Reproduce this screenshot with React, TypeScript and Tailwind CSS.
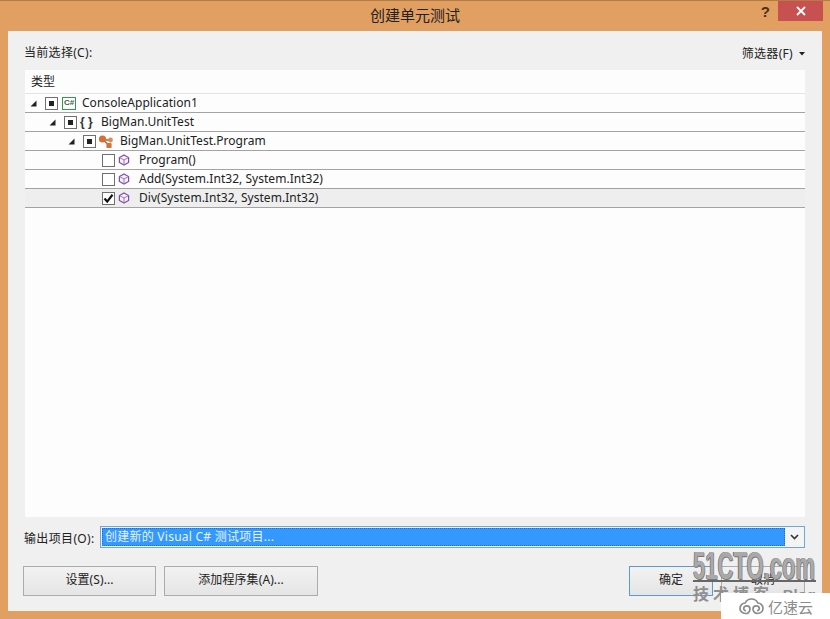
import React from 'react';

const UI_FONT = 'font-["Noto_Sans","Noto_Sans_CJK_SC",sans-serif]';

type Row = {
  level: number;
  label: string;
  kind: 'project' | 'namespace' | 'class' | 'method';
  check: 'mixed' | 'on' | 'off';
  selected?: boolean;
};

const rows: Row[] = [
  { level: 0, label: 'ConsoleApplication1', kind: 'project', check: 'mixed' },
  { level: 1, label: 'BigMan.UnitTest', kind: 'namespace', check: 'mixed' },
  { level: 2, label: 'BigMan.UnitTest.Program', kind: 'class', check: 'mixed' },
  { level: 3, label: 'Program()', kind: 'method', check: 'off' },
  { level: 3, label: 'Add(System.Int32, System.Int32)', kind: 'method', check: 'off' },
  { level: 3, label: 'Div(System.Int32, System.Int32)', kind: 'method', check: 'on', selected: true },
];

function Expander() {
  return (
    <svg width="7" height="7" viewBox="0 0 7 7" className="block">
      <path d="M6.5 0.5V6.5H0.5Z" fill="#222" />
    </svg>
  );
}

function CheckBox({ state }: { state: Row['check'] }) {
  return (
    <div className="w-[13px] h-[13px] shrink-0 border border-[#6f6f6f] bg-white flex items-center justify-center">
      {state === 'mixed' && <div className="w-[5px] h-[5px] bg-[#222]" />}
      {state === 'on' && (
        <svg width="11" height="11" viewBox="0 0 11 11">
          <path d="M1.5 5.6 L4.2 8.6 L9.5 1.8" fill="none" stroke="#111" strokeWidth="2.2" />
        </svg>
      )}
    </div>
  );
}

function MethodIcon() {
  return (
    <svg width="12" height="12" viewBox="0 0 12 12" className="block">
      <path d="M6 1 L10.6 3.5 V8.5 L6 11 L1.4 8.5 V3.5 Z" fill="#f4effa" stroke="#7d4fa8" strokeWidth="1.2" />
      <path d="M1.6 3.6 L6 6 L10.4 3.6 M6 6 V10.8" fill="none" stroke="#9b78c0" strokeWidth="1" />
    </svg>
  );
}

function ClassIcon() {
  return (
    <svg width="16" height="15" viewBox="0 0 16 15" className="block">
      <path d="M5 6 L12 6 M5 6 L11 11" stroke="#a9612f" strokeWidth="1.4" fill="none" />
      <circle cx="4.5" cy="5" r="3.6" fill="#d2723a" />
      <circle cx="12.5" cy="6" r="2.4" fill="#dd8a55" />
      <rect x="8.4" y="9" width="5.2" height="5" rx="1" fill="#d2723a" />
    </svg>
  );
}

function RowIcon({ kind }: { kind: Row['kind'] }) {
  if (kind === 'project') {
    return (
      <div className="ml-[2px] w-[14px] h-[13px] border border-[#2f9e4a] bg-white flex items-center justify-center text-[8px] leading-none font-bold text-[#3f5a48] font-['Liberation_Sans',sans-serif]">
        C#
      </div>
    );
  }
  if (kind === 'namespace') {
    return <div className="ml-[1px] text-[12px] leading-none whitespace-nowrap font-bold text-[#333] font-['Liberation_Sans',sans-serif]">{'{ }'}</div>;
  }
  if (kind === 'class') return <ClassIcon />;
  return <div className="ml-[1px]"><MethodIcon /></div>;
}

function TreeRow({ row }: { row: Row }) {
  const isLeaf = row.kind === 'method';
  return (
    <div
      className={`h-[19px] flex items-center border-b border-[#a3a3a3] ${row.selected ? 'bg-[#eeeeee]' : 'bg-[#fdfdfd]'}`}
      style={{ paddingLeft: 5 + row.level * 19 }}
    >
      <div className="w-[15px] shrink-0">{!isLeaf && <Expander />}</div>
      <CheckBox state={row.check} />
      <div className="w-[24px] shrink-0 pl-[2px] flex items-center">
        <RowIcon kind={row.kind} />
      </div>
      <span className="text-[12px] leading-none tracking-[0.03px] text-[#222] whitespace-nowrap">{row.label}</span>
    </div>
  );
}

function DialogButton({ label, className }: { label: string; className: string }) {
  return (
    <button className={`h-[30px] pb-[2px] border bg-gradient-to-b from-[#f2f2f2] to-[#e5e5e5] text-[12px] tracking-[0.1px] text-[#222] ${className}`}>
      {label}
    </button>
  );
}

function Watermark() {
  return (
    <div className="absolute right-0 bottom-0 w-[137px] h-[67px] font-['Liberation_Sans','Noto_Sans_CJK_SC',sans-serif]">
      <div className="absolute left-0 top-0 w-[123px] h-[30px] border-b-2 border-[#666] overflow-visible">
        <span className="block origin-top-left scale-x-[0.58] text-[38px] leading-[28px] font-bold text-[#a9a9a9] whitespace-nowrap [text-shadow:-1px_0_0_#666,1px_1px_0_#777]">51CTO.com</span>
      </div>
      <div className="absolute left-0 top-[33px] w-[123px] flex justify-between text-[16px] leading-[20px] font-bold text-[#8f8f8f]">
        <span className="tracking-[4px]">技术博客</span>
        <span className="text-[15px]">Blog</span>
      </div>
      <div className="absolute left-[28px] right-0 top-[41px] bottom-0 bg-white flex items-center pl-[18px] gap-[4px]">
        <svg width="25" height="17" viewBox="0 0 25 17" fill="none" stroke="#8b8b8b" strokeWidth="1.7" className="block">
          <path d="M9 15.5 H6.5 C3.3 15.5 1 13.2 1 10.3 C1 7.3 3.4 5 6.2 5 C7.3 2.5 9.7 1 12.5 1 C15.3 1 17.7 2.5 18.8 5 C21.6 5 24 7.3 24 10.3 C24 13.2 21.7 15.5 18.5 15.5 C15.8 15.5 14 13.4 14 11 C14 9 15.4 7.8 17.3 7.8 C19 7.8 20.3 9 20.3 10.6 C20.3 12 19.2 12.8 18 12.6" />
          <path d="M7 12.6 C5.8 12.8 4.7 12 4.7 10.6 C4.7 9 6 7.8 7.7 7.8 C9.6 7.8 11 9 11 11 C11 13 10 14.5 8.5 15.5" />
        </svg>
        <span className="text-[15px] leading-none text-[#8b8b8b] font-['Noto_Sans_CJK_SC',sans-serif]">亿速云</span>
      </div>
    </div>
  );
}

export default function App() {
  return (
    <div className={`relative w-[830px] h-[619px] overflow-hidden bg-[#e29f62] border-t border-[#b27c48] flex flex-col ${UI_FONT}`}>
      {/* title bar */}
      <div className="relative h-[30px] shrink-0 pb-[2px] flex items-center justify-center text-[15px] text-[#222]">
        创建单元测试
        <span className="absolute right-[60px] top-[1px] text-[15px] leading-[20px] font-bold text-[#4a3218] font-['Liberation_Sans',sans-serif]">?</span>
        <div className="absolute right-[7px] top-0 w-[45px] h-[20px] bg-[#c75050] flex items-center justify-center">
          <svg width="10" height="10" viewBox="0 0 10 10">
            <path d="M1 1 L9 9 M9 1 L1 9" stroke="#fff" strokeWidth="1.8" />
          </svg>
        </div>
      </div>

      {/* client area */}
      <div className="mx-2 h-[580px] shrink-0 bg-[#f0f0f0] flex flex-col text-[#222]">
        <div className="h-[39px] shrink-0 pl-[16px] pr-[17px] flex justify-between items-start pt-[14px] text-[12px] tracking-[0.3px] leading-4">
          <span>当前选择(C):</span>
          <span className="flex items-center gap-[6px] pt-[1px]">
            筛选器(F)
            <svg width="6" height="4" viewBox="0 0 6 4" className="block">
              <path d="M0 0H6L3 3.5Z" fill="#222" />
            </svg>
          </span>
        </div>

        <div className="mx-[17px] h-[447px] shrink-0 bg-[#fdfdfd]">
          <div className="h-[24px] border-b border-[#e4e4e4] pl-[6px] flex items-center text-[12px]">类型</div>
          {rows.map((row) => (
            <TreeRow key={row.label} row={row} />
          ))}
        </div>

        <div className="mt-[9px] ml-[16px] mr-[17px] h-[22px] shrink-0 flex items-center">
          <span className="w-[76px] shrink-0 pt-[3px] text-[12px] tracking-[0.35px] whitespace-nowrap">输出项目(O):</span>
          <div className="flex-1 h-[22px] border border-[#6ea5dc] bg-[#f4f4f4] flex items-center p-[1px]">
            <div className="flex-1 h-full bg-[#3399ff] border border-dotted border-[#1f6fc0] text-[#e6f2ff] text-[12px] tracking-[0.25px] leading-none flex items-center pl-[2px] pb-[1px]">
              创建新的 Visual C# 测试项目...
            </div>
            <div className="w-[18px] flex justify-center">
              <svg width="9" height="6" viewBox="0 0 9 6">
                <path d="M1 1 L4.5 4.5 L8 1" fill="none" stroke="#333" strokeWidth="1.6" />
              </svg>
            </div>
          </div>
        </div>

        <div className="mt-[18px] ml-[15px] mr-[17px] flex">
          <DialogButton label="设置(S)..." className="w-[133px] border-[#acacac]" />
          <DialogButton label="添加程序集(A)..." className="w-[154px] ml-[8px] border-[#acacac]" />
          <div className="flex-1" />
          <DialogButton label="确定" className="w-[84px] border-[#5b9bd5]" />
          <DialogButton label="取消" className="w-[84px] ml-[8px] border-[#acacac]" />
        </div>
      </div>

      <Watermark />
    </div>
  );
}
